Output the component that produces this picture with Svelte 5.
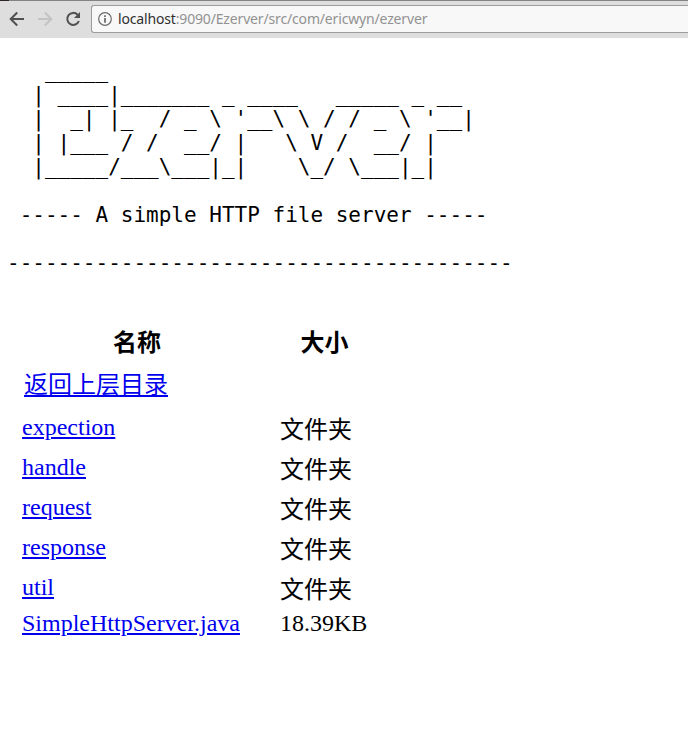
<script>
  const banner = [
    '   _____',
    '  | ____|_______ _ ____   _____ _ __',
    "  |  _| |_  / _ \\ '__\\ \\ / / _ \\ '__|",
    '  | |___ / /  __/ |   \\ V /  __/ |',
    '  |_____/___\\___|_|    \\_/ \\___|_|',
    '',
    ' ----- A simple HTTP file server -----',
    '',
    '-'.repeat(40)
  ].join('\n');

  const entries = [
    { name: 'expection', size: '文件夹' },
    { name: 'handle', size: '文件夹' },
    { name: 'request', size: '文件夹' },
    { name: 'response', size: '文件夹' },
    { name: 'util', size: '文件夹' },
    { name: 'SimpleHttpServer.java', size: '18.39KB', file: true }
  ];
</script>

<header class="toolbar">
  <svg class="nav" width="18" height="18" viewBox="0 0 18 18" fill="none" stroke="#505050" stroke-width="2">
    <path d="M16 9H3M9.2 2.5 2.7 9l6.5 6.5" />
  </svg>
  <svg class="nav" width="18" height="18" viewBox="0 0 18 18" fill="none" stroke="#c3c3c3" stroke-width="2">
    <path d="M2 9h13M8.8 2.5 15.3 9l-6.5 6.5" />
  </svg>
  <svg class="nav" width="18" height="18" viewBox="0 0 18 18">
    <path d="M13.6 4.7A6 6 0 1 0 14.9 11" fill="none" stroke="#505050" stroke-width="2" />
    <path d="M16 2v6h-6z" fill="#505050" />
  </svg>
  <div class="address">
    <svg width="14" height="14" viewBox="0 0 14 14">
      <circle cx="7" cy="7" r="6.3" fill="none" stroke="#6b6b6b" stroke-width="1.2" />
      <path d="M6.2 3.3h1.6v1.6H6.2zM6.2 6h1.6v4.8H6.2z" fill="#5c5c5c" />
    </svg>
    <span class="url"><b>localhost</b>:9090/Ezerver/src/com/ericwyn/ezerver</span>
  </div>
</header>

<main>
  <pre>{banner}</pre>
  <table>
    <thead>
      <tr><th>名称</th><th>大小</th></tr>
    </thead>
    <tbody>
      <tr class="up"><td><a href="#up">返回上层目录</a></td><td></td></tr>
      {#each entries as entry}
        <tr class:file={entry.file}>
          <td><a href="#{entry.name}">{entry.name}</a></td>
          <td class:folder={!entry.file}>{entry.size}</td>
        </tr>
      {/each}
    </tbody>
  </table>
</main>

<style>
  :global(body) {
    margin: 0;
    background: #fff;
    overflow: hidden;
  }
  .toolbar {
    box-sizing: border-box;
    height: 38px;
    display: flex;
    align-items: center;
    padding: 1px 0 1px 8px;
    gap: 10px;
    background:
      linear-gradient(#2b2426, #2b2426) 0 0 / 9px 1px no-repeat,
      linear-gradient(#858282, #858282) 0 0 / 100% 1px no-repeat,
      #dedede;
  }
  .nav {
    flex: none;
  }
  .address {
    box-sizing: border-box;
    flex: 1;
    height: 28px;
    margin-left: -1px;
    display: flex;
    align-items: center;
    gap: 6px;
    padding-left: 6px;
    border: 1px solid #9c9c9c;
    border-right: 0;
    border-radius: 3px 0 0 3px;
    background: #f8f8f8;
  }
  .url {
    font: 14px/24px 'Noto Sans', sans-serif;
    letter-spacing: -0.16px;
    color: #929292;
    white-space: nowrap;
  }
  .url b {
    font-weight: 400;
    color: #303030;
  }
  pre {
    margin: 0;
    padding: 21px 0 0 7px;
    font: 21px/24px 'DejaVu Sans Mono', monospace;
    color: #000;
  }
  table {
    margin: 45px 0 0 22px;
    border-collapse: collapse;
    table-layout: fixed;
    width: 347px;
    font: 24px 'Liberation Serif', 'Noto Sans CJK SC', serif;
    color: #000;
  }
  th,
  td {
    box-sizing: border-box;
    padding: 0;
    height: 40px;
    line-height: 40px;
    text-align: left;
    vertical-align: top;
    white-space: nowrap;
  }
  th {
    height: 43px;
    padding-top: 3px;
    text-align: center;
    font-weight: 700;
  }
  th:first-child {
    width: 258px;
    padding-right: 28px;
  }
  .up td {
    height: 44px;
    line-height: 44px;
  }
  .up a {
    margin-left: 2px;
  }
  .folder {
    padding-top: 7px;
    line-height: 33px;
  }
  .file td {
    height: 32px;
    line-height: 32px;
  }
  a {
    color: #0000ee;
    text-decoration: underline;
  }
</style>
